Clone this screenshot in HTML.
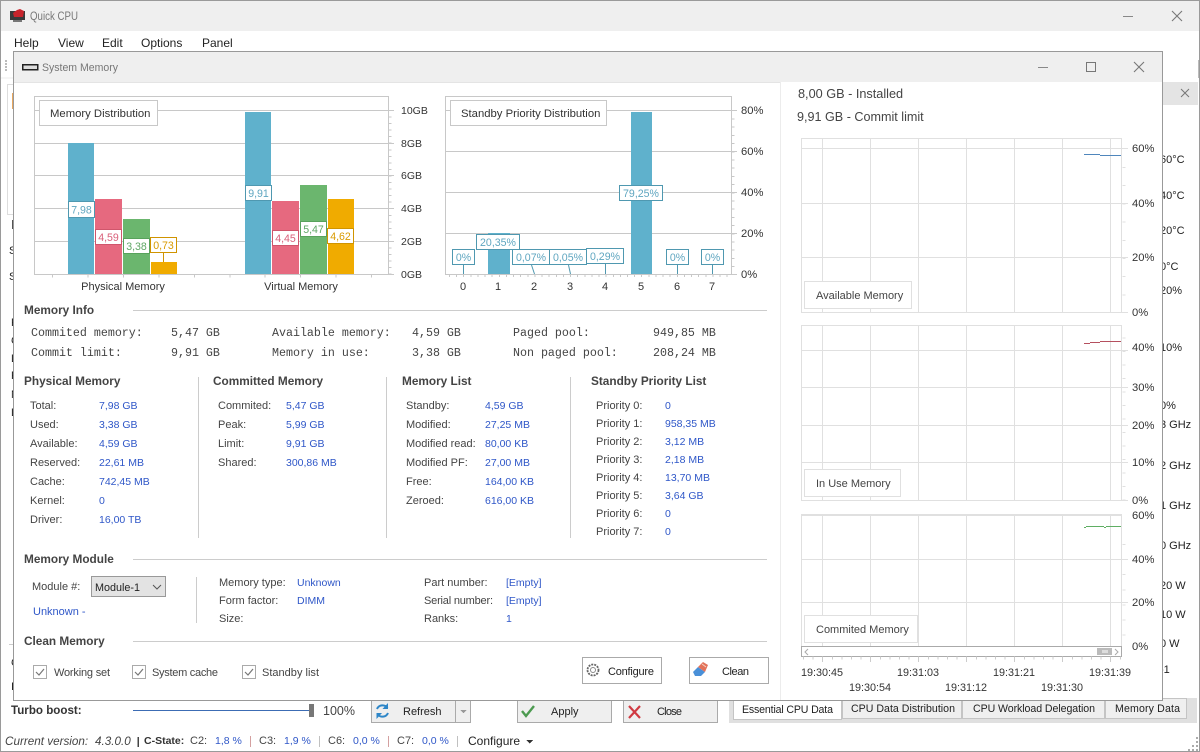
<!DOCTYPE html>
<html><head><meta charset="utf-8"><title>Quick CPU</title>
<style>
html,body{margin:0;padding:0;background:#fff;width:1200px;height:752px;overflow:hidden}
svg{display:block}
text{font-family:"Liberation Sans",sans-serif;font-size:11px;fill:#444;white-space:pre}
.k{fill:#222}
.b{fill:#2f57c8;font-size:10.5px}
.h{font-weight:bold;fill:#444;font-size:11.8px}
.m{font-family:"Liberation Mono",monospace;font-size:11.65px;fill:#444}
.ax{fill:#333;text-anchor:middle}
.ay{fill:#333;font-size:11.2px}
.ag{fill:#333;font-size:10.5px}
.lc{text-anchor:middle;font-size:10.6px}
.bl{fill:#5fa6c0}.re{fill:#d9607a}.gr{fill:#5fa765}.or{fill:#d99a00}
.g{stroke:#c8c8c8;stroke-width:1;fill:none}
.gl{stroke:#e0e0e0;stroke-width:1;fill:none}
.lb{fill:#fff;stroke-width:1}
.tab{font-size:10.6px;fill:#222}
.lg{font-size:11.3px;fill:#333}
</style></head><body>
<svg width="1200" height="752" viewBox="0 0 1200 752" xmlns="http://www.w3.org/2000/svg" shape-rendering="crispEdges">
<!-- main window -->
<rect width="1200" height="752" fill="#fff"/>
<rect x="0.5" y="0.5" width="1199" height="751" fill="none" stroke="#9a9a9a"/>
<rect x="1" y="1" width="1198" height="30" fill="#efefef"/>
<g shape-rendering="auto">
<rect x="10" y="11" width="15" height="9" fill="#3a3a3a"/><path d="M13 13l4-3 3-1 4 2-1 6h-9z" fill="#c8242c"/><rect x="13" y="20" width="9" height="2" fill="#777"/>
</g>
<text x="30" y="20" textLength="48" lengthAdjust="spacingAndGlyphs" style="font-size:11.5px;fill:#777">Quick CPU</text>
<path d="M1123 16.5h10" stroke="#888"/>
<g shape-rendering="auto"><path d="M1172 11l10 10M1182 11l-10 10" stroke="#777" stroke-width="1.1"/></g>
<text x="14" y="47" class="k" style="font-size:12px">Help</text>
<text x="58" y="47" class="k" style="font-size:12px">View</text>
<text x="102" y="47" class="k" style="font-size:12px">Edit</text>
<text x="141" y="47" class="k" style="font-size:12px">Options</text>
<text x="202" y="47" class="k" style="font-size:12px">Panel</text>
<!-- background bits left -->
<path d="M5 60h2v2h-2zM5 63h2v2h-2zM5 66h2v2h-2zM5 69h2v2h-2z" fill="#bbb"/>
<path d="M1 78h12" stroke="#eee"/>
<rect x="7.5" y="84.5" width="8" height="130" fill="#fff" stroke="#ddd"/>
<rect x="12" y="93" width="2" height="16" fill="#e8a860"/>
<rect x="12" y="220" width="1" height="9" fill="#555"/>
<text x="9" y="254" class="k">S</text><text x="9" y="280" class="k">S</text>
<text x="11" y="326" class="k">P</text><text x="11" y="344" class="k">C</text><text x="11" y="362" class="k">L</text><text x="11" y="379" class="k">P</text><text x="11" y="398" class="k">N</text><text x="11" y="416" class="k">L</text>
<path d="M9 644.5h4" stroke="#ccc"/>
<text x="11" y="666" class="k">C</text><text x="11" y="690" class="k">I</text>
<!-- background bits right -->
<path d="M1198.5 60v18" stroke="#bbb"/>
<rect x="1163" y="82" width="35" height="23" fill="#e4e4e4"/>
<g shape-rendering="auto"><path d="M1181 89l8 8M1189 89l-8 8" stroke="#777"/></g>
<text x="1160" y="163" class="k">60°C</text><text x="1160" y="199" class="k">40°C</text><text x="1160" y="234" class="k">20°C</text><text x="1160" y="270" class="k">0°C</text><text x="1160" y="294" class="k">20%</text>
<text x="1160" y="351" class="k">10%</text><text x="1160" y="409" class="k">0%</text>
<text x="1160" y="428" class="k">3 GHz</text><text x="1160" y="469" class="k">2 GHz</text><text x="1160" y="509" class="k">1 GHz</text><text x="1160" y="549" class="k">0 GHz</text>
<text x="1160" y="589" class="k">20 W</text><text x="1160" y="618" class="k">10 W</text><text x="1160" y="647" class="k">0 W</text><text x="1160" y="673" class="k">-1</text>
<!-- tab strip -->
<rect x="729" y="698" width="468" height="25" fill="#e0e0e0"/>
<rect x="733.500" y="698.500" width="108" height="21" fill="#fff" stroke="#c4c4c4"/>
<rect x="842.500" y="698.500" width="119" height="20" fill="#efefef" stroke="#c4c4c4"/>
<rect x="962.500" y="698.500" width="142" height="20" fill="#efefef" stroke="#c4c4c4"/>
<rect x="1105.500" y="698.500" width="81" height="20" fill="#efefef" stroke="#c4c4c4"/>
<text x="742" y="713" class="tab" textLength="91">Essential CPU Data</text>
<text x="851" y="712" class="tab" textLength="104">CPU Data Distribution</text>
<text x="973" y="712" class="tab" textLength="122">CPU Workload Delegation</text>
<text x="1115" y="712" class="tab" textLength="65">Memory Data</text>
<path d="M1192 745h2v2h-2zM1196 745h2v2h-2zM1196 741h2v2h-2zM1188 749h2v2h-2zM1192 749h2v2h-2zM1196 749h2v2h-2zM1196 737h2v2h-2z" fill="#aaa"/>
<!-- bottom bar -->
<text x="11" y="714" class="h" style="fill:#333;font-size:11.6px">Turbo boost:</text>
<path d="M133 710.500h177" stroke="#3c6cb4"/>
<rect x="309" y="704" width="5" height="13" fill="#777"/>
<text x="323" y="715" style="font-size:12.500px">100%</text>
<rect x="371.500" y="700.500" width="84" height="22" fill="#efefef" stroke="#aaa"/>
<rect x="455.500" y="700.500" width="15" height="22" fill="#efefef" stroke="#aaa"/>
<g shape-rendering="auto" fill="none" stroke="#2e86c8" stroke-width="2">
<path d="M377 709a6 6 0 0 1 10.500-1"/><path d="M388 713a6 6 0 0 1-10.500 1"/>
<path d="M388 703v6h-5.500z" fill="#2e86c8" stroke="none"/><path d="M376.500 719v-6h5.500z" fill="#2e86c8" stroke="none"/>
</g>
<text x="403" y="715" class="k">Refresh</text>
<path d="M460 710h7l-3.500 3z" fill="#999"/>
<rect x="517.500" y="700.500" width="94" height="22" fill="#efefef" stroke="#aaa"/>
<g shape-rendering="auto"><path d="M522 711l4 5 8-10" fill="none" stroke="#4c9a50" stroke-width="2.400"/></g>
<text x="551" y="715" class="k">Apply</text>
<rect x="623.500" y="700.500" width="94" height="22" fill="#efefef" stroke="#aaa"/>
<g shape-rendering="auto"><path d="M629 706l11 12M640 706l-11 12" stroke="#d03a42" stroke-width="2.200"/></g>
<text x="657" y="715" class="k" textLength="25">Close</text>
<path d="M1 735.500h1198" stroke="#fff"/>
<text x="5" y="745" style="font-style:italic;font-size:11.7px">Current version:</text>
<text x="95" y="745" style="font-style:italic;font-size:11.7px">4.3.0.0</text>
<path d="M138 737v10" stroke="#444" stroke-width="1.500"/>
<text x="144" y="744" class="h" style="fill:#333;font-size:10.500px">C-State:</text>
<text x="190" y="744">C2:</text><text x="215" y="744" class="b">1,8 %</text>
<path d="M250.500 736v11" stroke="#d4a0a0"/>
<text x="259" y="744">C3:</text><text x="284" y="744" class="b">1,9 %</text>
<path d="M319.500 736v11" stroke="#c0c0c0"/>
<text x="328" y="744">C6:</text><text x="353" y="744" class="b">0,0 %</text>
<path d="M388.500 736v11" stroke="#d4a0a0"/>
<text x="397" y="744">C7:</text><text x="422" y="744" class="b">0,0 %</text>
<path d="M457.500 736v11" stroke="#c0c0c0"/>
<text x="468" y="745" class="k" style="font-size:12px">Configure</text>
<path d="M526 740h7l-3.500 3.500z" fill="#333"/>

<!-- child window -->
<rect x="13.500" y="51.500" width="1149" height="649" fill="#fff" stroke="#999"/>
<rect x="14" y="52" width="1148" height="30" fill="#efefef"/>
<path d="M14 82.500h766" stroke="#e4e4e4"/>
<rect x="22.500" y="64.500" width="15" height="5" fill="#ddd" stroke="#222" stroke-width="1.500"/>
<text x="42" y="71" textLength="76" lengthAdjust="spacingAndGlyphs" style="font-size:11.3px;fill:#777">System Memory</text>
<path d="M1038 67.500h10" stroke="#888"/>
<rect x="1086.500" y="62.500" width="9" height="9" fill="none" stroke="#777"/>
<g shape-rendering="auto"><path d="M1134 62l10 10M1144 62l-10 10" stroke="#777" stroke-width="1.100"/></g>
<path d="M780.500 82v618" stroke="#ececec"/>

<!-- Chart 1 -->
<rect x="34.500" y="96.500" width="354" height="178" class="g"/>
<path d="M34 110.500h360M34 143.500h360M34 175.500h360M34 208.500h360M34 241.500h360M388 274.500h6" class="g"/>
<line x1="390" y1="116.500" x2="390" y2="275" stroke="#c8c8c8" stroke-width="3" stroke-dasharray="1 5.550"/>
<line x1="52" y1="276" x2="375" y2="276" stroke="#c8c8c8" stroke-width="3" stroke-dasharray="1 34.450"/>
<g fill="#5fb1cc"><rect x="68" y="143" width="26" height="131"/><rect x="245" y="112" width="26" height="162"/></g>
<g fill="#e6697f"><rect x="95" y="199" width="27" height="75"/><rect x="272" y="201" width="27" height="73"/></g>
<g fill="#6bb66e"><rect x="123" y="219" width="27" height="55"/><rect x="300" y="185" width="27" height="89"/></g>
<g fill="#f0ab00"><rect x="151" y="262" width="26" height="12"/><rect x="328" y="199" width="26" height="75"/></g>
<path d="M163.500 253v9" stroke="#d09400"/>
<rect x="39.500" y="100.500" width="118" height="25" fill="#fff" stroke="#c8c8c8"/>
<text x="50" y="117" class="lg">Memory Distribution</text>
<rect x="68.500" y="201.500" width="26" height="16" class="lb" stroke="#4f98b0"/><text x="81.500" y="213.500" class="lc bl">7,98</text>
<rect x="95.500" y="229.500" width="26" height="15" class="lb" stroke="#d0566c"/><text x="108.500" y="241" class="lc re">4,59</text>
<rect x="123.500" y="238.500" width="26" height="15" class="lb" stroke="#58a25c"/><text x="136.500" y="250" class="lc gr">3,38</text>
<rect x="150.500" y="237.500" width="26" height="15" class="lb" stroke="#d09400"/><text x="163.500" y="249" class="lc or">0,73</text>
<rect x="245.500" y="185.500" width="26" height="15" class="lb" stroke="#4f98b0"/><text x="258.500" y="197" class="lc bl">9,91</text>
<rect x="272.500" y="230.500" width="26" height="15" class="lb" stroke="#d0566c"/><text x="285.500" y="242" class="lc re">4,45</text>
<rect x="300.500" y="221.500" width="26" height="15" class="lb" stroke="#58a25c"/><text x="313.500" y="233" class="lc gr">5,47</text>
<rect x="327.500" y="228.500" width="26" height="15" class="lb" stroke="#d09400"/><text x="340.500" y="240" class="lc or">4,62</text>
<text x="123" y="290" class="ax">Physical Memory</text>
<text x="301" y="290" class="ax">Virtual Memory</text>
<text x="401" y="114" class="ag">10GB</text><text x="401" y="147" class="ag">8GB</text><text x="401" y="179" class="ag">6GB</text><text x="401" y="212" class="ag">4GB</text><text x="401" y="245" class="ag">2GB</text><text x="401" y="278" class="ag">0GB</text>

<!-- Chart 2 -->
<rect x="445.500" y="96.500" width="286" height="178" class="g"/>
<path d="M445 110.500h292M445 151.500h292M445 192.500h292M445 233.500h292M731 274.500h6" class="g"/>
<line x1="733" y1="118.500" x2="733" y2="275" stroke="#c8c8c8" stroke-width="3" stroke-dasharray="1 7.200"/>
<line x1="449" y1="276" x2="730" y2="276" stroke="#c8c8c8" stroke-width="2" stroke-dasharray="1 6.120"/>
<g fill="#5fb1cc"><rect x="488" y="233" width="22" height="41"/><rect x="631" y="112" width="21" height="162"/></g>
<rect x="450.500" y="100.500" width="156" height="25" fill="#fff" stroke="#c8c8c8"/>
<text x="461" y="117" class="lg">Standby Priority Distribution</text>
<g stroke="#4f98b0" fill="none">
<path d="M463.500 265v9M605.500 264v10M677.500 265v9M712.500 265v9"/>
<g shape-rendering="auto"><path d="M531.500 265l3 9M568.500 265l2 9"/></g>
</g>
<g stroke="#4f98b0">
<rect x="452.500" y="249.500" width="22" height="15" class="lb"/>
<rect x="476.500" y="234.500" width="43" height="15" class="lb"/>
<rect x="512.500" y="249.500" width="37" height="15" class="lb"/>
<rect x="549.500" y="249.500" width="37" height="15" class="lb"/>
<rect x="586.500" y="248.500" width="37" height="15" class="lb"/>
<rect x="619.500" y="185.500" width="43" height="15" class="lb"/>
<rect x="666.500" y="249.500" width="22" height="15" class="lb"/>
<rect x="701.500" y="249.500" width="22" height="15" class="lb"/>
</g>
<text x="463.500" y="261" class="lc bl">0%</text>
<text x="498" y="246" class="lc bl">20,35%</text>
<text x="531" y="261" class="lc bl">0,07%</text>
<text x="568" y="261" class="lc bl">0,05%</text>
<text x="605" y="260" class="lc bl">0,29%</text>
<text x="641" y="197" class="lc bl">79,25%</text>
<text x="677.500" y="261" class="lc bl">0%</text>
<text x="712.500" y="261" class="lc bl">0%</text>
<text x="463" y="290" class="ax">0</text><text x="498" y="290" class="ax">1</text><text x="534" y="290" class="ax">2</text><text x="570" y="290" class="ax">3</text><text x="605" y="290" class="ax">4</text><text x="641" y="290" class="ax">5</text><text x="677" y="290" class="ax">6</text><text x="712" y="290" class="ax">7</text>
<text x="741" y="114" class="ay">80%</text><text x="741" y="155" class="ay">60%</text><text x="741" y="196" class="ay">40%</text><text x="741" y="237" class="ay">20%</text><text x="741" y="278" class="ay">0%</text>

<!-- Memory Info -->
<text x="24" y="314" class="h">Memory Info</text>
<path d="M133 310.500h634" stroke="#ccc"/>
<text x="31" y="336" class="m">Commited memory:</text><text x="171" y="336" class="m">5,47 GB</text>
<text x="31" y="356" class="m">Commit limit:</text><text x="171" y="356" class="m">9,91 GB</text>
<text x="272" y="336" class="m">Available memory:</text><text x="412" y="336" class="m">4,59 GB</text>
<text x="272" y="356" class="m">Memory in use:</text><text x="412" y="356" class="m">3,38 GB</text>
<text x="513" y="336" class="m">Paged pool:</text><text x="653" y="336" class="m">949,85 MB</text>
<text x="513" y="356" class="m">Non paged pool:</text><text x="653" y="356" class="m">208,24 MB</text>

<!-- columns -->
<text x="24" y="385" class="h">Physical Memory</text>
<text x="213" y="385" class="h">Committed Memory</text>
<text x="402" y="385" class="h">Memory List</text>
<text x="591" y="385" class="h">Standby Priority List</text>
<path d="M198.500 377v161M386.500 377v161M570.500 377v161" stroke="#ccc"/>

<text x="30" y="409">Total:</text><text x="99" y="409" class="b">7,98 GB</text>
<text x="30" y="428">Used:</text><text x="99" y="428" class="b">3,38 GB</text>
<text x="30" y="447">Available:</text><text x="99" y="447" class="b">4,59 GB</text>
<text x="30" y="466">Reserved:</text><text x="99" y="466" class="b">22,61 MB</text>
<text x="30" y="485">Cache:</text><text x="99" y="485" class="b">742,45 MB</text>
<text x="30" y="504">Kernel:</text><text x="99" y="504" class="b">0</text>
<text x="30" y="523">Driver:</text><text x="99" y="523" class="b">16,00 TB</text>

<text x="218" y="409">Commited:</text><text x="286" y="409" class="b">5,47 GB</text>
<text x="218" y="428">Peak:</text><text x="286" y="428" class="b">5,99 GB</text>
<text x="218" y="447">Limit:</text><text x="286" y="447" class="b">9,91 GB</text>
<text x="218" y="466">Shared:</text><text x="286" y="466" class="b">300,86 MB</text>

<text x="406" y="409">Standby:</text><text x="485" y="409" class="b">4,59 GB</text>
<text x="406" y="428">Modified:</text><text x="485" y="428" class="b">27,25 MB</text>
<text x="406" y="447">Modified read:</text><text x="485" y="447" class="b">80,00 KB</text>
<text x="406" y="466">Modified PF:</text><text x="485" y="466" class="b">27,00 MB</text>
<text x="406" y="485">Free:</text><text x="485" y="485" class="b">164,00 KB</text>
<text x="406" y="504">Zeroed:</text><text x="485" y="504" class="b">616,00 KB</text>

<text x="596" y="409">Priority 0:</text><text x="665" y="409" class="b">0</text>
<text x="596" y="427">Priority 1:</text><text x="665" y="427" class="b">958,35 MB</text>
<text x="596" y="445">Priority 2:</text><text x="665" y="445" class="b">3,12 MB</text>
<text x="596" y="463">Priority 3:</text><text x="665" y="463" class="b">2,18 MB</text>
<text x="596" y="481">Priority 4:</text><text x="665" y="481" class="b">13,70 MB</text>
<text x="596" y="499">Priority 5:</text><text x="665" y="499" class="b">3,64 GB</text>
<text x="596" y="517">Priority 6:</text><text x="665" y="517" class="b">0</text>
<text x="596" y="535">Priority 7:</text><text x="665" y="535" class="b">0</text>

<!-- Memory Module -->
<text x="24" y="563" class="h">Memory Module</text>
<path d="M133 559.500h634" stroke="#ccc"/>
<text x="32" y="590">Module #:</text>
<rect x="91.500" y="576.500" width="74" height="20" fill="#e3e3e3" stroke="#999"/>
<text x="95" y="591" class="k" style="font-size:10.8px">Module-1</text>
<g shape-rendering="auto"><path d="M153 585l4 4 4-4" fill="none" stroke="#555"/></g>
<text x="33" y="615" class="b" style="font-size:11px">Unknown -</text>
<path d="M196.500 577v46" stroke="#ccc"/>
<text x="219" y="586">Memory type:</text><text x="297" y="586" class="b">Unknown</text>
<text x="219" y="604">Form factor:</text><text x="297" y="604" class="b">DIMM</text>
<text x="219" y="622">Size:</text>
<text x="424" y="586">Part number:</text><text x="506" y="586" class="b">[Empty]</text>
<text x="424" y="604" textLength="69">Serial number:</text><text x="506" y="604" class="b">[Empty]</text>
<text x="424" y="622">Ranks:</text><text x="506" y="622" class="b">1</text>

<!-- Clean Memory -->
<text x="24" y="645" class="h">Clean Memory</text>
<path d="M133 641.500h634" stroke="#ccc"/>
<g fill="#fff" stroke="#aaa">
<rect x="33.500" y="665.500" width="13" height="13"/><rect x="132.500" y="665.500" width="13" height="13"/><rect x="242.500" y="665.500" width="13" height="13"/>
</g>
<g shape-rendering="auto" fill="none" stroke="#777" stroke-width="1.200">
<path d="M36 672l3 3 5-6"/><path d="M135 672l3 3 5-6"/><path d="M245 672l3 3 5-6"/>
</g>
<text x="54" y="676" textLength="56">Working set</text>
<text x="152" y="676" textLength="66">System cache</text>
<text x="262" y="676" textLength="57">Standby list</text>
<rect x="582.500" y="657.500" width="79" height="26" fill="#fff" stroke="#aaa"/>
<g shape-rendering="auto"><circle cx="593" cy="670" r="5.500" fill="none" stroke="#666" stroke-width="1.800" stroke-dasharray="2 1"/><circle cx="593" cy="670" r="2.500" fill="none" stroke="#888"/></g>
<text x="608" y="675" class="k" textLength="46">Configure</text>
<rect x="689.500" y="657.500" width="79" height="26" fill="#fff" stroke="#aaa"/>
<g shape-rendering="auto">
<path d="M693 672l5-5 7 5-4 4h-6z" fill="#4a90d8"/><path d="M698 667l5-5 5 3-3 7z" fill="#e2725a"/><path d="M702 664l4 3" stroke="#f5d0c0"/>
</g>
<text x="722" y="675" class="k" textLength="27">Clean</text>

<!-- Right panel -->
<text x="798" y="98" style="font-size:12.7px">8,00 GB - Installed</text>
<text x="797" y="121" style="font-size:12.6px">9,91 GB - Commit limit</text>

<!-- Chart A -->
<rect x="801.500" y="138.500" width="320" height="174" class="gl"/>
<path d="M801 148.500h327M801 203.500h327M801 257.500h327M801 312.500h327" class="gl"/>
<path d="M822.500 138v174M870.500 138v174M918.500 138v174M966.500 138v174M1014.500 138v174M1062.500 138v174M1110.500 138v174" class="gl"/>
<line x1="1124" y1="167" x2="1124" y2="312" stroke="#e0e0e0" stroke-width="3" stroke-dasharray="1 17.200"/>
<path d="M1084 154.500h16M1100 155.500h21" stroke="#4f86bc"/>
<rect x="804.500" y="281.500" width="107" height="27" fill="#fff" stroke="#e0e0e0"/>
<text x="816" y="299">Available Memory</text>
<text x="1132" y="152" class="ay">60%</text><text x="1132" y="207" class="ay">40%</text><text x="1132" y="261" class="ay">20%</text><text x="1132" y="316" class="ay">0%</text>

<!-- Chart B -->
<rect x="801.500" y="325.500" width="320" height="175" class="gl"/>
<path d="M801 350.500h327M801 387.500h327M801 425.500h327M801 462.500h327M801 500.500h327" class="gl"/>
<path d="M822.500 325v175M870.500 325v175M918.500 325v175M966.500 325v175M1014.500 325v175M1062.500 325v175M1110.500 325v175" class="gl"/>
<line x1="1124" y1="337.500" x2="1124" y2="500" stroke="#e0e0e0" stroke-width="3" stroke-dasharray="1 12.500"/>
<path d="M1084 343.500h6M1090 342.500h10M1100 341.500h21" stroke="#b5505f"/>
<rect x="804.500" y="469.500" width="96" height="27" fill="#fff" stroke="#e0e0e0"/>
<text x="816" y="487">In Use Memory</text>
<text x="1132" y="351" class="ay">40%</text><text x="1132" y="391" class="ay">30%</text><text x="1132" y="429" class="ay">20%</text><text x="1132" y="466" class="ay">10%</text><text x="1132" y="504" class="ay">0%</text>

<!-- Chart C -->
<rect x="801.500" y="514.500" width="320" height="132" class="gl"/>
<path d="M801 515.500h321M801 559.500h327M801 602.500h327" class="gl"/>
<path d="M822.500 515v132M870.500 515v132M918.500 515v132M966.500 515v132M1014.500 515v132M1062.500 515v132M1110.500 515v132" class="gl"/>
<line x1="1124" y1="544" x2="1124" y2="647" stroke="#e0e0e0" stroke-width="3" stroke-dasharray="1 14.100"/>
<path d="M1084 527.500h2M1086 526.500h18M1104 527.500h2M1106 526.500h15" stroke="#5fae63"/>
<rect x="804.500" y="615.500" width="113" height="27" fill="#fff" stroke="#e0e0e0"/>
<text x="816" y="633">Commited Memory</text>
<text x="1132" y="519" class="ay">60%</text><text x="1132" y="563" class="ay">40%</text><text x="1132" y="606" class="ay">20%</text><text x="1132" y="650" class="ay">0%</text>
<!-- scrollbar -->
<rect x="801.500" y="646.500" width="320" height="10" fill="#fff" stroke="#aaa"/>
<rect x="1097" y="648" width="15" height="7" fill="#bbb"/>
<path d="M1103 650v3M1105 650v3M1107 650v3" stroke="#fff"/>
<g shape-rendering="auto" fill="none" stroke="#aaa"><path d="M808 649l-3 3 3 3M1115 649l3 3-3 3"/></g>
<!-- time axis -->
<line x1="803" y1="658" x2="1122" y2="658" stroke="#ccc" stroke-width="3" stroke-dasharray="1 8.600"/>
<path d="M822.500 657v5M870.500 657v5M918.500 657v5M966.500 657v5M1014.500 657v5M1062.500 657v5M1110.500 657v5" stroke="#ccc"/>
<text x="822" y="676" class="ax" style="font-size:10.8px">19:30:45</text><text x="918" y="676" class="ax" style="font-size:10.8px">19:31:03</text><text x="1014" y="676" class="ax" style="font-size:10.8px">19:31:21</text><text x="1110" y="676" class="ax" style="font-size:10.8px">19:31:39</text>
<text x="870" y="691" class="ax" style="font-size:10.8px">19:30:54</text><text x="966" y="691" class="ax" style="font-size:10.8px">19:31:12</text><text x="1062" y="691" class="ax" style="font-size:10.8px">19:31:30</text>
</svg>
</body></html>
